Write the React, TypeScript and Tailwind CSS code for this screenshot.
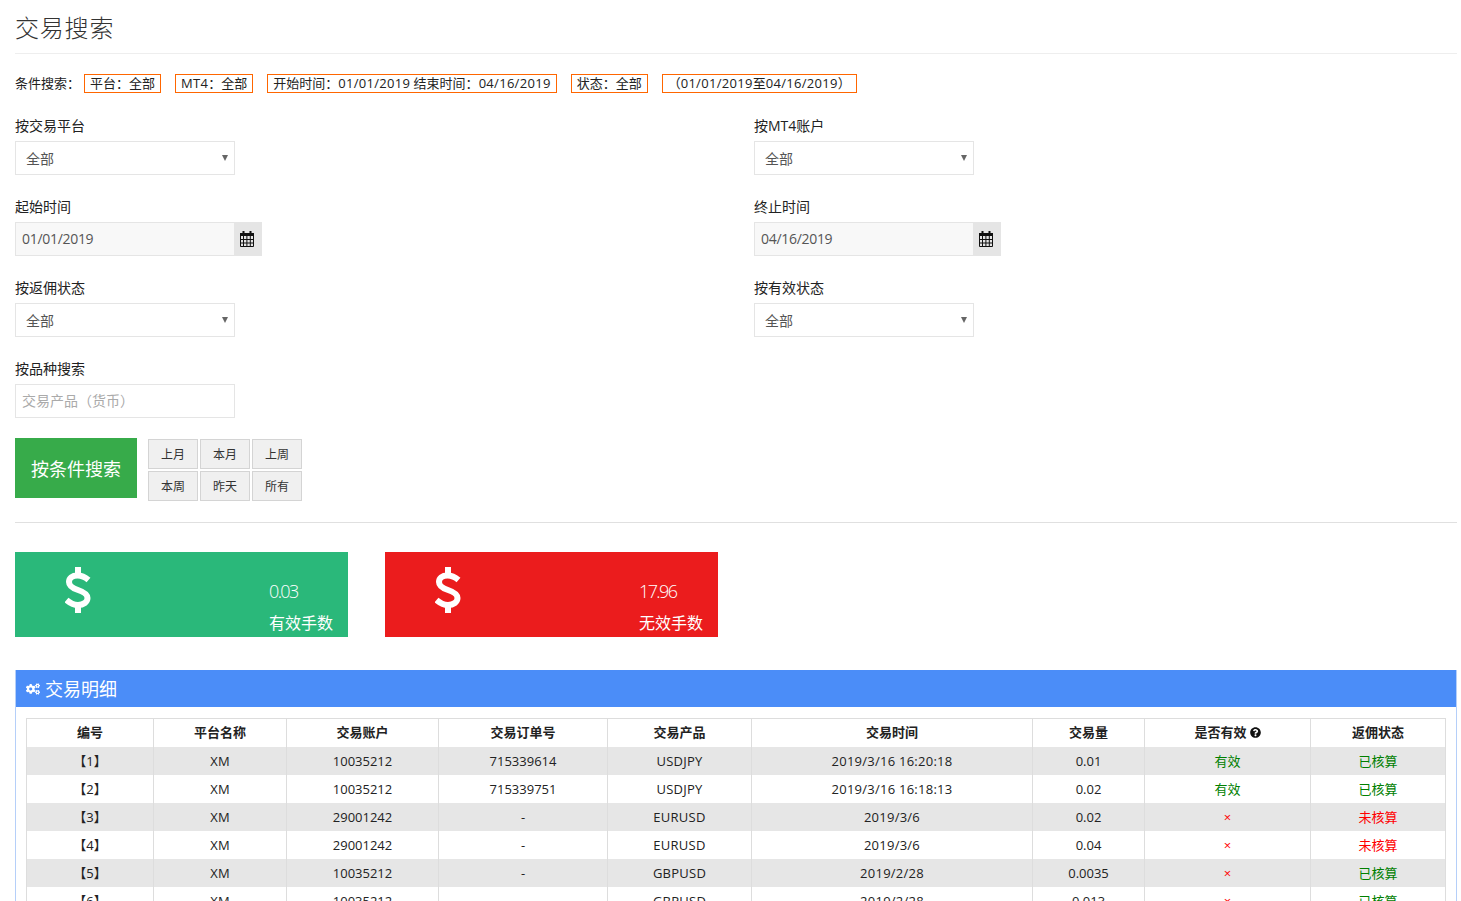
import { FaCogs, FaQuestionCircle } from "react-icons/fa";

const rows = [
  ["【1】", "XM", "10035212", "715339614", "USDJPY", "2019/3/16 16:20:18", "0.01", "有效", "已核算"],
  ["【2】", "XM", "10035212", "715339751", "USDJPY", "2019/3/16 16:18:13", "0.02", "有效", "已核算"],
  ["【3】", "XM", "29001242", "-", "EURUSD", "2019/3/6", "0.02", "×", "未核算"],
  ["【4】", "XM", "29001242", "-", "EURUSD", "2019/3/6", "0.04", "×", "未核算"],
  ["【5】", "XM", "10035212", "-", "GBPUSD", "2019/2/28", "0.0035", "×", "已核算"],
  ["【6】", "XM", "10035212", "-", "GBPUSD", "2019/2/28", "0.013", "×", "已核算"],
];

const cols = [
  { title: "编号", w: "w-[127px]" },
  { title: "平台名称", w: "w-[133px]" },
  { title: "交易账户", w: "w-[152px]" },
  { title: "交易订单号", w: "w-[169px]" },
  { title: "交易产品", w: "w-[144px]" },
  { title: "交易时间", w: "w-[281px]" },
  { title: "交易量", w: "w-[112px]" },
  { title: "是否有效", w: "w-[166px]" },
  { title: "返佣状态", w: "w-[135px]" },
];

function Tag({ children }: { children: React.ReactNode }) {
  return (
    <span className="h-[19px] border border-[#ff6600] px-[5px] leading-[17px] whitespace-nowrap text-[#222]">
      {children}
    </span>
  );
}

// latin runs in the tags sit a little wider than the font gives
function Num({ children }: { children: React.ReactNode }) {
  return <span className="tracking-[0.3px]">{children}</span>;
}

function Field({ label, children }: { label: string; children: React.ReactNode }) {
  return (
    <div>
      <div className="h-[24px] text-[14px] leading-[18px] text-[#222]">{label}</div>
      {children}
    </div>
  );
}

function SelectBox() {
  return (
    <div className="relative w-[220px]">
      <select className="block h-[34px] w-full appearance-none border border-[#e5e5e5] bg-white pl-[10px] text-[14px] text-[#555] outline-none">
        <option>全部</option>
      </select>
      <span className="absolute right-[7px] top-[14px] h-0 w-0 border-x-[3px] border-t-[6px] border-x-transparent border-t-[#666]" />
    </div>
  );
}

function CalendarIcon() {
  return (
    <svg width="14" height="16" viewBox="0 0 14 16" fill="none">
      <rect x="2.5" y="0" width="2" height="3" fill="#111" />
      <rect x="9.5" y="0" width="2" height="3" fill="#111" />
      <rect x="0" y="2" width="14" height="3" fill="#111" />
      <path d="M.5 5v10.500h13V5M3.500 5v10M6.900 5v10M10.300 5v10M0 8.500h14M0 12h14" stroke="#111" />
    </svg>
  );
}

function DollarIcon() {
  return (
    <svg width="26" height="46" viewBox="0 0 26 46" fill="none" stroke="white" strokeWidth="6">
      <path d="M13 0v9M13 37v9" />
      <path d="M23.500 13C20 10 16.500 8.500 12.500 8.500 7 8.500 4 11 4 15c0 4 3 6 9 8 6 2 9.500 4 9.500 8 0 4-4 7-9.500 7-4 0-8-2-11.500-5" />
    </svg>
  );
}

function DateBox({ value }: { value: string }) {
  return (
    <div className="flex w-[247px]">
      <input
        readOnly
        value={value}
        className="h-[34px] w-[220px] border border-[#e5e5e5] bg-[#f8f8f8] px-[6px] pb-[2px] text-[14px] tracking-[-0.3px] text-[#555] outline-none"
      />
      <div className="flex h-[34px] w-[27px] items-center justify-center bg-[#e5e5e5] pr-[3px]">
        <CalendarIcon />
      </div>
    </div>
  );
}

function QuickBtn({ children }: { children: React.ReactNode }) {
  return (
    <button className="h-[30px] w-[50px] border border-[#d4d4d4] bg-[#f0f0f0] pt-[2px] text-[12px] text-[#333]">{children}</button>
  );
}

function StatCard({ color, value, label }: { color: string; value: string; label: string }) {
  return (
    <div className={"flex h-[85px] w-[333px] text-white " + color}>
      <div className="w-[254px] pl-[50px] pt-[15px]">
        <DollarIcon />
      </div>
      <div className="pt-[26px]">
        <div className="text-[18px] font-light leading-[26px] tracking-[-1.6px]">{value}</div>
        <div className="mt-[8px] text-[16px] leading-[22px]">{label}</div>
      </div>
    </div>
  );
}

export default function App() {
  return (
    <div className="h-screen overflow-hidden bg-white pl-[15px] pr-[4px] font-['Open_Sans','Noto_Sans_CJK_SC',sans-serif] text-[13px] text-[#222]">
      <h1 className="h-[54px] border-b border-[#eee] pt-[10px] text-[24px] font-light leading-[36px] tracking-[0.8px] text-[#333]">交易搜索</h1>

      <div className="mt-[20px] flex h-[19px] items-center gap-[14px]">
        <span className="mr-[-14px] w-[69px] whitespace-nowrap">{"条件搜索\uFF1A"}</span>
        <Tag>{"平台\uFF1A全部"}</Tag>
        <Tag><Num>MT4</Num>{"\uFF1A全部"}</Tag>
        <Tag>{"开始时间\uFF1A"}<Num>01/01/2019</Num>{" 结束时间\uFF1A"}<Num>04/16/2019</Num></Tag>
        <Tag>{"状态\uFF1A全部"}</Tag>
        <Tag>{"\uFF08"}<Num>01/01/2019</Num>至<Num>04/16/2019</Num>{"\uFF09"}</Tag>
      </div>

      <div className="mt-[24px] grid grid-cols-[739px_1fr] gap-y-[23px]">
        <Field label="按交易平台"><SelectBox /></Field>
        <Field label="按MT4账户"><SelectBox /></Field>
        <Field label="起始时间"><DateBox value="01/01/2019" /></Field>
        <Field label="终止时间"><DateBox value="04/16/2019" /></Field>
        <Field label="按返佣状态"><SelectBox /></Field>
        <Field label="按有效状态"><SelectBox /></Field>
        <Field label="按品种搜索">
          <input
            placeholder={"交易产品\uFF08货币\uFF09"}
            className="block h-[34px] w-[220px] border border-[#e5e5e5] px-[6px] pb-[2px] text-[14px] text-[#555] outline-none placeholder:text-[#aaa]"
          />
        </Field>
      </div>

      <div className="mt-[20px] flex h-[85px] items-start gap-[11px] border-b border-[#e0e0e0]">
        <button className="h-[60px] w-[122px] bg-[#37ab4a] pt-[2px] text-[18px] text-white">按条件搜索</button>
        <div className="mt-[1px] grid grid-cols-[50px_50px_50px] gap-[2px]">
          {["上月", "本月", "上周", "本周", "昨天", "所有"].map((t) => (
            <QuickBtn key={t}>{t}</QuickBtn>
          ))}
        </div>
      </div>

      <div className="mt-[29px] flex gap-[37px]">
        <StatCard color="bg-[#2ab87a]" value="0.03" label="有效手数" />
        <StatCard color="bg-[#eb1c1d]" value="17.96" label="无效手数" />
      </div>

      <div className="mt-[33px] border border-t-0 border-[#b5cff9]">
        <div className="flex h-[37px] items-center gap-[5px] bg-[#4b8df8] pl-[10px] pt-[1px] text-[18px] text-white">
          <FaCogs className="text-[14px]" />
          交易明细
        </div>
        <div className="pl-[10px] pt-[11px]">
          <table className="w-[1420px] table-fixed border border-[#ddd] text-center text-[13px]">
            <thead>
              <tr className="h-[28px]">
                {cols.map((c) => (
                  <th key={c.title} className={"border-l border-[#ddd] p-0 font-bold text-[#222] " + c.w}>
                    {c.title}
                    {c.title === "是否有效" && <FaQuestionCircle className="ml-[3px] inline align-[-1px] text-[11px] text-[#111]" />}
                  </th>
                ))}
              </tr>
            </thead>
            <tbody>
              {rows.map((r, i) => (
                <tr key={i} className={"h-[28px] " + (i % 2 === 0 ? "bg-[#e6e6e6]" : "bg-white")}>
                  {r.map((cell, j) => {
                    let color = "text-[#222]";
                    if (j === 1 || j === 4 || j === 5) color += " tracking-[0.25px]";
                    if (j === 7) color = cell === "有效" ? "text-[#008000]" : "text-[#ff0000]";
                    if (j === 8) color = cell === "已核算" ? "text-[#008000]" : "text-[#ff0000]";
                    return (
                      <td key={j} className={"border-l border-[#ddd] p-0 pt-[2px] " + color}>
                        {cell}
                      </td>
                    );
                  })}
                </tr>
              ))}
            </tbody>
          </table>
        </div>
      </div>
    </div>
  );
}
